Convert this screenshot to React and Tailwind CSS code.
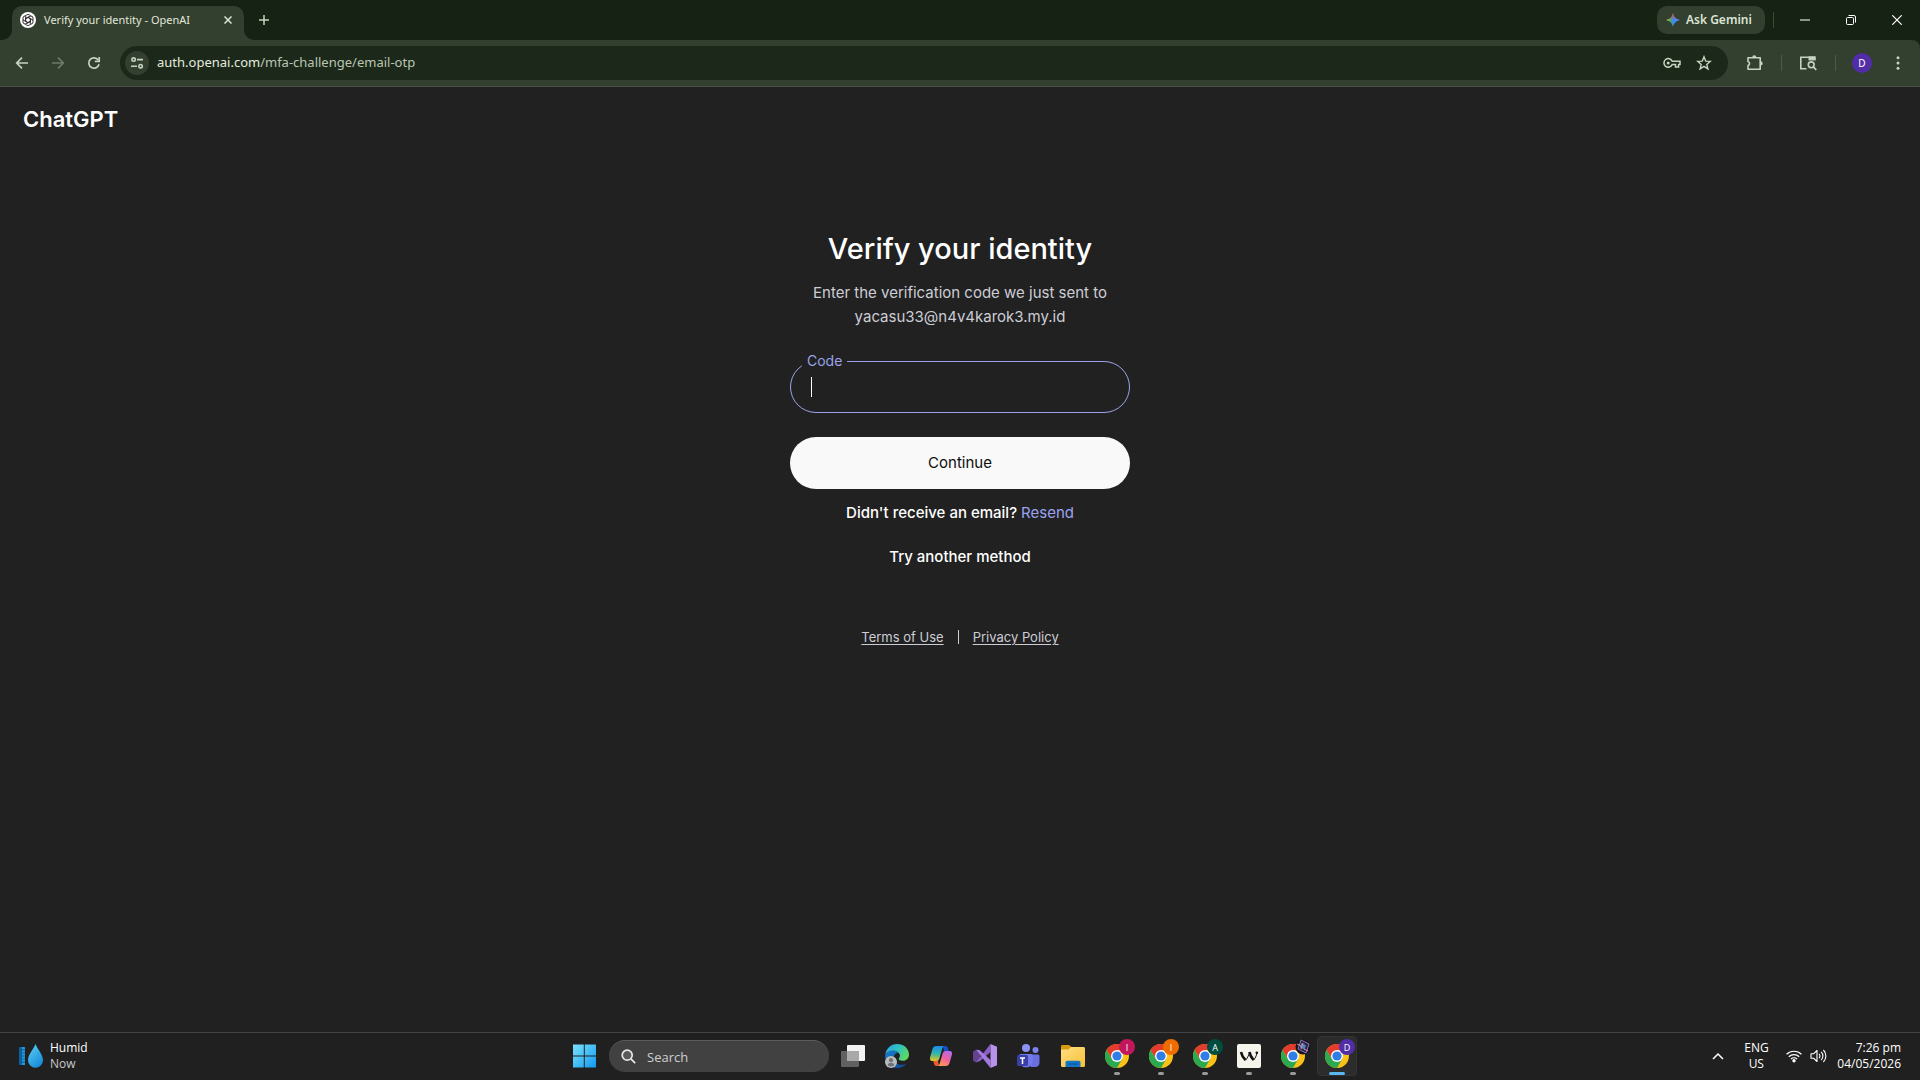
import React from "react";

const chromeProfiles = [
  { id: "pink", letter: "I", badge: "bg-[#c2185b]" },
  { id: "orange", letter: "I", badge: "bg-[#ef6c00]" },
  { id: "green", letter: "A", badge: "bg-[#004d40]" },
];

// ---------- browser icons ----------

const OpenAIFavicon = () => (
  <svg width="16" height="16" viewBox="0 0 16 16" className="shrink-0">
    <circle cx="8" cy="8" r="8" fill="#fff" />
    <g fill="none" stroke="#222" strokeWidth="0.9">
      {[0, 60, 120, 180, 240, 300].map((deg) => (
        <path
          key={deg}
          d="M5.6 6.6V4.9a2.4 2.4 0 0 1 3.6-2.1l1.6 1M8 5.3l2.4 1.4v2.6"
          transform={`rotate(${deg} 8 8)`}
        />
      ))}
    </g>
  </svg>
);

const TabFoot = ({ flip }) => (
  <svg
    width="10"
    height="10"
    viewBox="0 0 10 10"
    className={flip ? "-scale-x-100 self-end" : "self-end"}
  >
    <path d="M10 0v10H0A10 10 0 0 0 10 0z" fill="#333f2f" />
  </svg>
);

const ArrowIcon = ({ flip }) => (
  <svg width="14" height="14" viewBox="0 0 14 14" className={flip ? "-scale-x-100" : ""}>
    <path d="M13 7H2M7 1.7L1.7 7 7 12.3" fill="none" stroke="currentColor" strokeWidth="1.7" />
  </svg>
);

const ReloadIcon = () => (
  <svg width="14" height="14" viewBox="0 0 14 14">
    <path d="M12 8.2A5.2 5.2 0 1 1 11.2 4" fill="none" stroke="currentColor" strokeWidth="1.7" />
    <path d="M12.2 1v4.4H7.8" fill="none" stroke="currentColor" strokeWidth="1.7" />
  </svg>
);

const TuneIcon = () => (
  <svg width="14" height="14" viewBox="0 0 14 14" fill="none" stroke="currentColor" strokeWidth="1.6">
    <circle cx="3.6" cy="3.6" r="1.7" />
    <path d="M7 3.6h6M1 10.2h6" />
    <circle cx="10.6" cy="10.2" r="1.7" />
  </svg>
);

const KeyIcon = () => (
  <svg width="18" height="12" viewBox="0 0 18 12" fill="none" stroke="currentColor" strokeWidth="1.5">
    <path d="M9.2 4.2H17v3.4h-1.4V10h-3.1V7.6H9.2a4.3 4.3 0 1 1 0-3.4z" />
    <circle cx="5.2" cy="6" r="1.5" fill="currentColor" stroke="none" />
  </svg>
);

const StarIcon = () => (
  <svg width="16" height="16" viewBox="0 0 16 16">
    <path
      d="M8 1.8l1.7 4.3 4.6.3-3.5 3 1.1 4.5L8 11.4l-3.9 2.5 1.1-4.5-3.5-3 4.6-.3z"
      fill="none"
      stroke="currentColor"
      strokeWidth="1.4"
    />
  </svg>
);

const PuzzleIcon = () => (
  <svg width="18" height="18" viewBox="0 0 18 18">
    <path
      d="M2 3.8h12.2v11.4H2v-3.6a2.2 2.2 0 0 0 0-4.2z"
      fill="none"
      stroke="currentColor"
      strokeWidth="1.6"
      strokeLinejoin="round"
    />
    <path d="M6.2 3.4a2.1 2.1 0 0 1 4.2 0zM14.6 7.3a2.1 2.1 0 0 1 0 4.2z" fill="currentColor" />
  </svg>
);

const SidePanelIcon = () => (
  <svg width="18" height="16" viewBox="0 0 18 16">
    <path d="M7.5 13.8H1.8V2.2H16" fill="none" stroke="currentColor" strokeWidth="1.6" />
    <path d="M9.5 1.4h7.3v4H9.5z" fill="currentColor" />
    <circle cx="12.2" cy="9.8" r="2.9" fill="none" stroke="currentColor" strokeWidth="1.6" />
    <path d="M14.3 11.9l3 3" stroke="currentColor" strokeWidth="1.7" />
  </svg>
);

const GeminiIcon = () => (
  <svg width="14" height="14" viewBox="0 0 14 14">
    <defs>
      <linearGradient id="gem" x1="0" y1="0.5" x2="1" y2="0.5">
        <stop offset="0" stopColor="#fbbc04" />
        <stop offset="0.35" stopColor="#34a884" />
        <stop offset="0.55" stopColor="#4285f4" />
        <stop offset="1" stopColor="#4c8df6" />
      </linearGradient>
      <linearGradient id="gemTop" x1="0" y1="0" x2="0" y2="1">
        <stop offset="0" stopColor="#ea4335" />
        <stop offset="0.5" stopColor="#ea4335" stopOpacity="0" />
      </linearGradient>
    </defs>
    <path d="M7 0c1 4 3 6 7 7-4 1-6 3-7 7-1-4-3-6-7-7 4-1 6-3 7-7z" fill="url(#gem)" />
    <path d="M7 0c1 4 3 6 7 7-4 1-6 3-7 7-1-4-3-6-7-7 4-1 6-3 7-7z" fill="url(#gemTop)" />
  </svg>
);

// ---------- taskbar icons ----------

const WeatherIcon = () => (
  <svg width="24" height="24" viewBox="0 0 24 24">
    <defs>
      <linearGradient id="drop" x1="0" y1="0" x2="0.6" y2="1">
        <stop offset="0" stopColor="#5fd0f7" />
        <stop offset="1" stopColor="#1b8edb" />
      </linearGradient>
    </defs>
    <rect x="0" y="3" width="6" height="18" rx="0.6" fill="#1f9ce0" />
    <path d="M0 3h3v18H0z" fill="#0e5f9e" />
    <path d="M2.500 6H6M3.500 9H6M2.500 12H6M3.500 15H6M2.500 18H6" stroke="#0b4f86" strokeWidth="0.9" />
    <path d="M16.500 0c2 5.500 7.500 10.500 7.500 16.300a7.500 7.500 0 0 1-15 0C9 10.500 14.500 5.500 16.500 0z" fill="url(#drop)" />
  </svg>
);

const WindowsIcon = () => (
  <svg width="24" height="24" viewBox="0 0 24 24">
    <defs>
      <linearGradient id="win" x1="0" y1="0" x2="24" y2="24" gradientUnits="userSpaceOnUse">
        <stop offset="0" stopColor="#7ee6fd" />
        <stop offset="1" stopColor="#0f97f0" />
      </linearGradient>
    </defs>
    <path d="M1 .5h10.800v11H1zM12.800.5H24v11H12.800zM1 12.500h10.800v11H1zM12.800 12.500H24v11H12.800z" fill="url(#win)" />
  </svg>
);

const TaskViewIcon = () => (
  <svg width="24" height="24" viewBox="0 0 24 24">
    <rect x="6" y="1" width="18" height="16" rx="1" fill="#f2f2f2" />
    <rect x="0" y="7" width="18" height="16" rx="1" fill="#6d6d6d" fillOpacity="0.85" />
    <path d="M6 7h12v10H6z" fill="#a9a9a9" />
  </svg>
);

const EdgeIcon = () => (
  <svg width="24" height="24" viewBox="0 0 24 24">
    <defs>
      <linearGradient id="edgeTop" x1="0" y1="0.2" x2="1" y2="0.6">
        <stop offset="0" stopColor="#2aa5e8" />
        <stop offset="0.5" stopColor="#2fc3c0" />
        <stop offset="1" stopColor="#62d957" />
      </linearGradient>
      <linearGradient id="edgeLow" x1="0" y1="0" x2="0.8" y2="1">
        <stop offset="0" stopColor="#1a7fd0" />
        <stop offset="1" stopColor="#0f4a94" />
      </linearGradient>
    </defs>
    <path d="M.2 11C1 4.500 6 0 12 0c7 0 12 4.800 12 10.500 0 4-3 6.300-6.300 6.300-2.700 0-4-1-4-2 0-.7 1.200-1 1.200-3.200C14.900 9 12 6.700 8.500 6.700 4 6.700 1 9 .2 11z" fill="url(#edgeTop)" />
    <path d="M.2 11C1 9 4 6.700 8.500 6.700c2 0 3.800.8 4.900 2C10.500 9 8.600 11.500 8.600 14.200c0 4 3.800 6.600 8 6.600 2 0 3.600-.5 5-1.300C19.500 22.500 16 24 12 24 5 24-.5 18 .2 11z" fill="url(#edgeLow)" />
    <circle cx="6" cy="18" r="6" fill="#b9bcbe" />
    <circle cx="6" cy="16.200" r="2.100" fill="#6e7275" />
    <path d="M2.600 21.300c.3-3.300 6.500-3.300 6.800 0a6 6 0 0 1-6.800 0z" fill="#6e7275" />
  </svg>
);

const CopilotIcon = () => (
  <svg width="24" height="24" viewBox="0 0 24 24">
    <defs>
      <linearGradient id="copA" x1="0.3" y1="0" x2="0.2" y2="1">
        <stop offset="0" stopColor="#1b8fe8" />
        <stop offset="0.5" stopColor="#35b7a8" />
        <stop offset="1" stopColor="#f0c419" />
      </linearGradient>
      <linearGradient id="copB" x1="0.8" y1="0" x2="0.3" y2="1">
        <stop offset="0" stopColor="#b46af0" />
        <stop offset="0.5" stopColor="#ee5fa0" />
        <stop offset="1" stopColor="#ff9a52" />
      </linearGradient>
    </defs>
    <path d="M14 2h2.500c1.300 0 2 .7 2.400 2l.8 3H15z" fill="#1a4fc4" />
    <path d="M10 22H7.500c-1.300 0-2-.7-2.400-2l-.8-3H9z" fill="#ef5a35" />
    <path d="M7.200 2H15c-1 .6-1.500 1.700-1.900 3l-2.700 9.500c-.5 1.700-1.400 2.500-3 2.500H3.600C1 17 .6 15 1.200 12.700L3.500 4.900C4.100 3 5.300 2 7.200 2z" fill="url(#copA)" />
    <path d="M16.800 22H9c1-.6 1.500-1.700 1.900-3l2.700-9.500c.5-1.700 1.400-2.500 3-2.500h3.800c2.600 0 3 2 2.400 4.300l-2.300 7.800c-.6 1.900-1.800 2.900-3.700 2.900z" fill="url(#copB)" />
  </svg>
);

const VisualStudioIcon = () => (
  <svg width="24" height="24" viewBox="0 0 24 24">
    <path d="M0 7.500l3-1.700 4 3v6.700l-4 2.900-3-1.700z" fill="#64418f" />
    <path d="M3 18.400L17.500 0v8L7 17z" fill="#8b5fc7" />
    <path d="M3 5.800L6.500 6 17.500 16v8z" fill="#a57adf" />
    <path d="M17.500 0L24 2.800v18.400L17.500 24z" fill="#b794ea" />
  </svg>
);

const TeamsIcon = () => (
  <svg width="24" height="24" viewBox="0 0 24 24">
    <circle cx="18.500" cy="6" r="3" fill="#7d83ee" />
    <path d="M13.500 10.500H21a1.500 1.500 0 0 1 1.500 1.500v6.500c0 3-2 4.500-4.500 4.500h-4.500z" fill="#6a6fe0" />
    <circle cx="9" cy="4" r="4" fill="#8c92f5" />
    <path d="M3.500 10h10.700a1.500 1.500 0 0 1 1.500 1.500V17c0 4-3 6.300-6.600 6.300S2 21 2 17v-5.500A1.500 1.500 0 0 1 3.500 10z" fill="#7479ea" />
    <rect x="0" y="11" width="11" height="11" rx="1.500" fill="#3a3fa8" />
    <path d="M3 14h5M5.500 14v6" stroke="#fff" strokeWidth="1.500" />
  </svg>
);

const ExplorerIcon = () => (
  <svg width="24" height="24" viewBox="0 0 24 24">
    <defs>
      <linearGradient id="folder" x1="0" y1="0" x2="1" y2="1">
        <stop offset="0" stopColor="#ffe083" />
        <stop offset="1" stopColor="#f7bf38" />
      </linearGradient>
    </defs>
    <path d="M0 6V2.500C0 1.700.6 1 1.500 1h6c.7 0 1 .2 1.500.7L10.500 3v3z" fill="#d99a12" />
    <path d="M0 5.500h7.500L10 3h12.500c.9 0 1.500.6 1.500 1.500v17c0 .9-.6 1.500-1.500 1.500h-21C.6 23 0 22.400 0 21.500z" fill="url(#folder)" />
    <path d="M4.500 23v-4.500c0-1 .8-1.700 1.700-1.700h11.600c1 0 1.700.7 1.700 1.700V23z" fill="#1277c9" />
    <path d="M7 20h10" stroke="#0a5a9f" strokeWidth="1.300" />
  </svg>
);

const ChromeIcon = () => (
  <svg width="24" height="24" viewBox="0 0 24 24">
    <circle cx="12" cy="12" r="12" fill="#fbc116" />
    <path d="M1.600 6A12 12 0 0 1 22.400 6H12L6.800 15z" fill="#e33b2e" />
    <path d="M1.600 6A12 12 0 0 0 12 24l5.200-9-10.400 0z" fill="#2da94f" />
    <circle cx="12" cy="12" r="6" fill="#fff" />
    <circle cx="12" cy="12" r="4.600" fill="#2f7de9" />
  </svg>
);

const WIcon = () => (
  <svg width="24" height="24" viewBox="0 0 24 24">
    <rect width="24" height="24" rx="2" fill="#f6f5ec" />
    <g fill="none" stroke="#111" strokeLinejoin="round">
      <path d="M4 8c.6 3 2 5.500 4.500 8M12.500 8c.4 3 1.800 5.500 4 8" strokeWidth="2.600" />
      <path d="M8.500 16.300c1.800-2 3.200-4.800 4-8M16.500 16.300c1.700-2 2.800-4.400 3.400-6.800" strokeWidth="1" />
    </g>
    <circle cx="19.800" cy="8.800" r="1.300" fill="#111" />
  </svg>
);

const PictureBadge = () => (
  <svg width="16" height="16" viewBox="0 0 16 16">
    <circle cx="8" cy="8" r="7.500" fill="#15131c" />
    <path d="M6 1l8 4-3 9-8-4z" fill="#2b2440" stroke="#8d78c0" strokeWidth="1" />
    <path d="M6.500 4l4.500 2.200-1.500 4.500L5 8.500z" fill="#4f86b8" />
    <path d="M2 5l4 2M9 10l4 2M8 4l-2 6" stroke="#e48bb0" strokeWidth="1" />
  </svg>
);

const WifiIcon = () => (
  <svg width="16" height="14" viewBox="0 0 16 14" fill="none" stroke="#fff" strokeWidth="1.200">
    <path d="M.6 5.300a10.500 10.500 0 0 1 14.800 0M2.800 7.700a7.400 7.400 0 0 1 10.400 0M5 10a4.300 4.300 0 0 1 6 0" />
    <circle cx="8" cy="11.800" r="1.700" fill="#fff" stroke="none" />
  </svg>
);

const VolumeIcon = () => (
  <svg width="17" height="14" viewBox="0 0 17 14" fill="none" stroke="#fff" strokeWidth="1.100">
    <path d="M1 4.800h2.500L7 1.500v11L3.500 9.200H1z" strokeLinejoin="round" />
    <path d="M9 4.800a3 3 0 0 1 0 4.400M11.200 2.900a5.800 5.800 0 0 1 0 8.200M13.400 1a8.500 8.500 0 0 1 0 12" />
  </svg>
);

// ---------- pieces ----------

const TaskButton = ({ label, running, active, badge, children }) => (
  <button
    aria-label={label}
    className="relative flex h-full w-11 items-center justify-center"
  >
    {active && (
      <span className="absolute inset-x-0.5 inset-y-[3px] rounded-sm border border-[#333] bg-[#2c2c2c]" />
    )}
    <span className="relative">{children}</span>
    {badge && <span className="absolute top-1.5 right-1">{badge}</span>}
    {running && (
      <span
        className={
          active
            ? "absolute bottom-1 h-[3px] w-4 rounded-full bg-[#5ab8ee]"
            : "absolute bottom-1 h-[3px] w-1.5 rounded-full bg-[#9a9a9a]"
        }
      />
    )}
  </button>
);

const LetterBadge = ({ letter, color }) => (
  <span
    className={`flex size-4 items-center justify-center rounded-full text-[9px] leading-none text-white ${color}`}
  >
    {letter}
  </span>
);

const BrowserChrome = () => (
  <header className="bg-[#162213] font-['Noto_Sans','Open_Sans',sans-serif] text-[#c6d3c0]">
    {/* Tab strip */}
    <div className="flex h-10 items-center">
      <div className="flex h-10 items-end pl-0.5">
        <TabFoot />
        <div className="flex h-[34px] w-[232px] items-center rounded-t-[10px] bg-[#333f2f] px-2 pb-1.5">
          <OpenAIFavicon />
          <span className="ml-2 flex-1 text-[11px] whitespace-nowrap text-[#e0e9da]">
            Verify your identity - OpenAI
          </span>
          <button aria-label="Close tab" className="flex size-4 items-center justify-center">
            <svg width="8" height="8" viewBox="0 0 8 8">
              <path d="M.5.5l7 7M7.500.5l-7 7" stroke="#dce6d6" strokeWidth="1.500" />
            </svg>
          </button>
        </div>
        <TabFoot flip />
      </div>
      <button aria-label="New tab" className="flex size-5 items-center justify-center">
        <svg width="10" height="10" viewBox="0 0 10 10">
          <path d="M5 0v10M0 5h10" stroke="#c6d3c0" strokeWidth="1.500" />
        </svg>
      </button>

      <div className="ml-auto flex items-center">
        <button className="flex h-7 w-[108px] items-center gap-1.5 rounded-[10px] bg-[#333f2f] pl-[9px] text-xs font-semibold whitespace-nowrap text-[#dbe5d5]">
          <GeminiIcon />
          Ask Gemini
        </button>
        <span className="mr-2 ml-2 h-4 w-px bg-[#3c4838]" />
        <button aria-label="Minimize" className="flex h-8 w-[46px] items-center justify-center">
          <span className="h-0.5 w-2.5 bg-[#8b9486]" />
        </button>
        <button aria-label="Restore" className="flex h-8 w-[46px] items-center justify-center">
          <svg width="10" height="10" viewBox="0 0 10 10" fill="none" stroke="#fff" strokeWidth="1">
            <rect x="0.5" y="2.500" width="7" height="7" rx="1" />
            <path d="M2.500.5H8a1.500 1.500 0 0 1 1.500 1.500v5.500" />
          </svg>
        </button>
        <button aria-label="Close" className="flex h-8 w-[46px] items-center justify-center">
          <svg width="10" height="10" viewBox="0 0 10 10">
            <path d="M.3.3l9.400 9.400M9.700.3L.3 9.700" stroke="#fff" strokeWidth="1.200" />
          </svg>
        </button>
      </div>
    </div>

    {/* Toolbar */}
    <div className="flex h-[47px] items-center rounded-tr-lg border-b border-[#4a5446] bg-[#333f2f] pl-1">
      <button aria-label="Back" className="flex w-9 justify-center">
        <ArrowIcon />
      </button>
      <button aria-label="Forward" className="flex w-9 justify-center text-[#6f7b6a]">
        <ArrowIcon flip />
      </button>
      <button aria-label="Reload" className="flex w-9 justify-center">
        <ReloadIcon />
      </button>
      <div className="ml-2 flex h-[34px] flex-1 items-center rounded-full bg-[#1c281a] pr-4 pl-[5px]">
        <button
          aria-label="View site information"
          className="flex size-6 items-center justify-center rounded-full bg-[#333f2f]"
        >
          <TuneIcon />
        </button>
        <p className="ml-2 flex-1 text-[13px] text-[#b9c6b3]">
          <span className="text-[#e4ecdf]">auth.openai.com</span>
          /mfa-challenge/email-otp
        </p>
        <button aria-label="Manage passwords">
          <KeyIcon />
        </button>
        <button aria-label="Bookmark this tab" className="ml-[15px]">
          <StarIcon />
        </button>
      </div>
      <button aria-label="Extensions" className="ml-[18px]">
        <PuzzleIcon />
      </button>
      <span className="ml-[17px] h-4 w-px bg-[#4d5a48]" />
      <button aria-label="Search this page" className="ml-[17px]">
        <SidePanelIcon />
      </button>
      <span className="ml-[18px] h-4 w-px bg-[#4d5a48]" />
      <button
        aria-label="Profile"
        className="ml-4 flex size-5 items-center justify-center rounded-full bg-[#512da8] text-[10px] text-white"
      >
        D
      </button>
      <button aria-label="Menu" className="mr-[14px] ml-[18px] flex w-4 justify-center">
        <svg width="4" height="14" viewBox="0 0 4 14" fill="currentColor">
          <circle cx="2" cy="1.700" r="1.500" />
          <circle cx="2" cy="7" r="1.500" />
          <circle cx="2" cy="12.300" r="1.500" />
        </svg>
      </button>
    </div>
  </header>
);

const VerifyPage = () => (
  <main className="flex-1 bg-[#212121] font-['Inter',sans-serif] text-white">
    <div className="px-[23px] pt-4">
      <h2 className="text-[22px] leading-8 font-semibold">ChatGPT</h2>
    </div>

    <div className="mx-auto flex w-[340px] flex-col items-center pt-[94px] text-center text-[15px] leading-6">
      <h1 className="text-[29px] leading-10 font-medium whitespace-nowrap">Verify your identity</h1>
      <p className="mt-3 whitespace-nowrap text-[#cdcdd6]">
        Enter the verification code we just sent to
        <br />
        yacasu33@n4v4karok3.my.id
      </p>

      <form className="mt-8 w-full" onSubmit={(e) => e.preventDefault()}>
        <div className="relative">
          <input
            id="code"
            type="text"
            autoComplete="one-time-code"
            className="block h-[52px] w-full rounded-full border border-[#9ba3e8] bg-transparent px-5 caret-transparent outline-none"
          />
          <label
            htmlFor="code"
            className="absolute -top-2.5 left-3 bg-[#212121] px-[5px] text-sm leading-5 text-[#9ba3e8]"
          >
            Code
          </label>
          <span className="absolute top-4 left-[21px] h-5 w-px bg-white" />
        </div>
        <button type="submit" className="mt-6 h-[52px] w-full rounded-full bg-[#f9f9f9] text-[#0d0d0d]">
          Continue
        </button>
      </form>

      <p className="mt-3 font-medium whitespace-nowrap">
        Didn't receive an email?{" "}
        <button className="font-normal text-[#9ba3f0]">Resend</button>
      </p>
      <button className="mt-5 font-medium">Try another method</button>

      <nav className="mt-14 flex items-center gap-[14px] text-[13px] text-[#cdcdd6]">
        <a href="#terms" className="underline underline-offset-2">Terms of Use</a>
        <span className="h-3.5 w-px bg-[#cdcdd6]" />
        <a href="#privacy" className="underline underline-offset-2">Privacy Policy</a>
      </nav>
    </div>
  </main>
);

const Taskbar = () => (
  <footer className="grid h-12 grid-cols-[1fr_auto_1fr] border-t border-[#444] bg-[#202020] pb-px font-['Open_Sans','Noto_Sans',sans-serif] text-xs leading-4 text-white">
    <button className="flex items-center gap-[7px] pl-[19px] text-left">
      <WeatherIcon />
      <span>
        Humid
        <br />
        <span className="text-[#c8c8c8]">Now</span>
      </span>
    </button>

    <div className="flex items-center pl-px">
      <TaskButton label="Start"><WindowsIcon /></TaskButton>
      <button className="mr-0.5 ml-[3px] flex h-8 w-[220px] items-center gap-[11px] rounded-full border-t border-[#5c5c5c] bg-[#414141] pl-3 text-[13px] text-[#cfcfcf]">
        <svg width="15" height="15" viewBox="0 0 15 15" fill="none" stroke="#e8e8e8" strokeWidth="1.700">
          <circle cx="6.200" cy="6.200" r="5" fill="#5a5a5a" />
          <path d="M9.900 9.900l4.300 4.300" />
        </svg>
        Search
      </button>
      <TaskButton label="Task view"><TaskViewIcon /></TaskButton>
      <TaskButton label="Edge"><EdgeIcon /></TaskButton>
      <TaskButton label="Copilot"><CopilotIcon /></TaskButton>
      <TaskButton label="Visual Studio"><VisualStudioIcon /></TaskButton>
      <TaskButton label="Teams"><TeamsIcon /></TaskButton>
      <TaskButton label="File Explorer"><ExplorerIcon /></TaskButton>
      {chromeProfiles.map((p) => (
        <TaskButton
          key={p.id}
          label="Chrome"
          running
          badge={<LetterBadge letter={p.letter} color={p.badge} />}
        >
          <ChromeIcon />
        </TaskButton>
      ))}
      <TaskButton label="W" running><WIcon /></TaskButton>
      <TaskButton label="Chrome" running badge={<PictureBadge />}><ChromeIcon /></TaskButton>
      <TaskButton
        label="Chrome"
        running
        active
        badge={<LetterBadge letter="D" color="bg-[#512da8]" />}
      >
        <ChromeIcon />
      </TaskButton>
    </div>

    <div className="flex items-center justify-end pr-[19px]">
      <button aria-label="Show hidden icons" className="mr-5">
        <svg width="12" height="8" viewBox="0 0 12 8">
          <path d="M1 7l5-5 5 5" fill="none" stroke="#fff" strokeWidth="1.500" />
        </svg>
      </button>
      <button className="mr-[18px] w-6 text-center">
        ENG
        <br />
        US
      </button>
      <button aria-label="Network and volume" className="mr-2.5 flex items-center gap-2">
        <WifiIcon />
        <VolumeIcon />
      </button>
      <button className="text-right">
        7:26 pm
        <br />
        04/05/2026
      </button>
    </div>
  </footer>
);

const App = () => {
  return (
    <div className="flex min-h-screen flex-col">
      <BrowserChrome />
      <VerifyPage />
      <Taskbar />
    </div>
  );
};

export default App;
